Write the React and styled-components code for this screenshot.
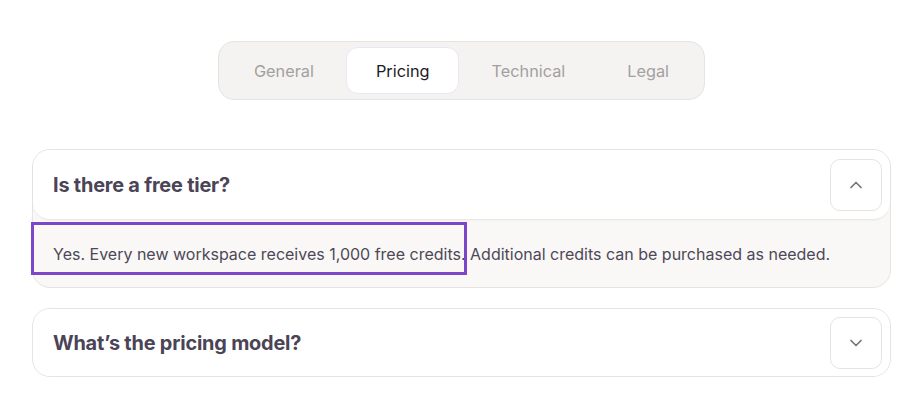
import React, { useState } from "react";
import styled, { createGlobalStyle } from "styled-components";
import { ChevronDown, ChevronUp } from "lucide-react";

const GlobalStyle = createGlobalStyle`
  html, body {
    margin: 0;
    padding: 0;
    background: #ffffff;
    font-family: "Inter", "Noto Sans", sans-serif;
  }
  * { box-sizing: border-box; }
`;

const Page = styled.div`
  width: 100%;
  padding: 41px 0 0;
  display: flex;
  flex-direction: column;
  align-items: center;
`;

const TabBar = styled.div`
  display: flex;
  gap: 2px;
  padding: 5px;
  background: #f4f3f2;
  border: 1px solid #e6e4e1;
  border-radius: 16px;
`;

const Tab = styled.button`
  height: 47px;
  padding: 0 29px;
  border-radius: 12px;
  border: 1px solid ${(p) => (p.active ? "#e9e7f7" : "transparent")};
  background: ${(p) => (p.active ? "#ffffff" : "transparent")};
  color: ${(p) => (p.active ? "#1c1a1f" : "#a3a09d")};
  font-family: inherit;
  font-size: 16.3px;
  cursor: pointer;
`;

const List = styled.div`
  width: 859px;
  margin-top: 49px;
  display: flex;
  flex-direction: column;
  gap: 20px;
`;

const Card = styled.div`
  position: relative;
  border: 1px solid #e6e4e2;
  border-radius: 18px;
  background: #f9f8f6;
`;

const Header = styled.div`
  height: ${(p) => (p.open ? "70px" : "67px")};
  padding: 0 8px 0 20px;
  display: flex;
  align-items: center;
  justify-content: space-between;
  background: #ffffff;
  border-radius: 17px;
  border-bottom: ${(p) => (p.open ? "1px solid #ebe9e6" : "none")};
  box-shadow: ${(p) => (p.open ? "0 1px 2px rgba(0,0,0,0.03)" : "none")};
`;

const Question = styled.h3`
  margin: 0;
  font-size: 19.9px;
  font-weight: 700;
  letter-spacing: -0.2px;
  color: #4a4456;
`;

const Toggle = styled.button`
  width: 52px;
  height: 52px;
  border-radius: 10px;
  border: 1px solid #e6e4e2;
  background: #ffffff;
  color: #76716d;
  display: flex;
  align-items: center;
  justify-content: center;
  cursor: pointer;
`;

const Answer = styled.p`
  margin: 0;
  height: 67px;
  padding: 0 20px;
  display: flex;
  align-items: center;
  font-size: 16px;
  color: #4d4858;
`;

const Highlight = styled.div`
  position: absolute;
  left: -2px;
  top: 72px;
  width: 436px;
  height: 53px;
  border: 3px solid #7b47c8;
  pointer-events: none;
`;

const tabs = ["General", "Pricing", "Technical", "Legal"];

const faqs = [
  {
    q: "Is there a free tier?",
    a: "Yes. Every new workspace receives 1,000 free credits. Additional credits can be purchased as needed.",
  },
  {
    q: "What\u2019s the pricing model?",
    a: "Usage-based pricing with volume discounts for larger teams.",
  },
];

export default function App() {
  const [active, setActive] = useState("Pricing");
  const [open, setOpen] = useState(0);

  return (
    <>
      <GlobalStyle />
      <Page>
        <TabBar>
          {tabs.map((t) => (
            <Tab key={t} active={t === active} onClick={() => setActive(t)}>
              {t}
            </Tab>
          ))}
        </TabBar>
        <List>
          {faqs.map((f, i) => (
            <Card key={f.q}>
              <Header open={open === i}>
                <Question>{f.q}</Question>
                <Toggle onClick={() => setOpen(open === i ? -1 : i)}>
                  {open === i ? (
                    <ChevronUp size={20} strokeWidth={2} />
                  ) : (
                    <ChevronDown size={20} strokeWidth={2} />
                  )}
                </Toggle>
              </Header>
              {open === i && <Answer>{f.a}</Answer>}
              {open === i && i === 0 && <Highlight />}
            </Card>
          ))}
        </List>
      </Page>
    </>
  );
}
